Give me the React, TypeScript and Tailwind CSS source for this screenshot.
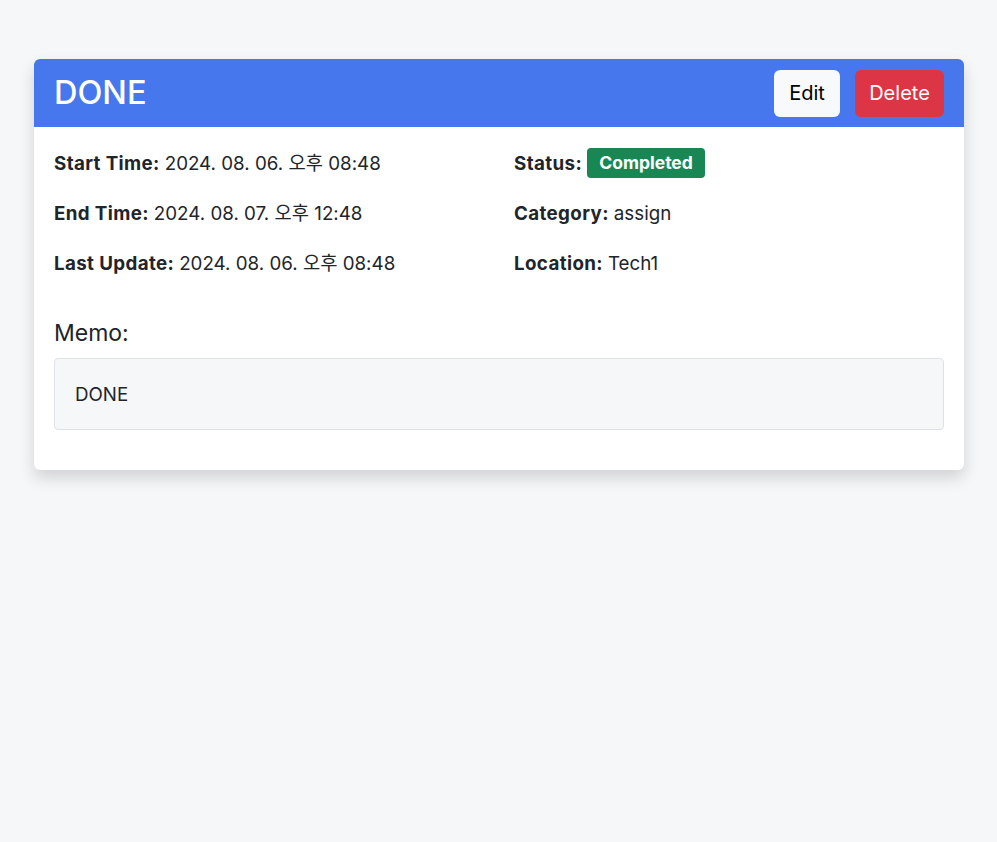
const rows = [
  { left: ["Start Time:", "2024. 08. 06. 오후 08:48"], right: "status" },
  { left: ["End Time:", "2024. 08. 07. 오후 12:48"], right: ["Category:", "assign"] },
  { left: ["Last Update:", "2024. 08. 06. 오후 08:48"], right: ["Location:", "Tech1"] },
];

function Field({ label, value }: { label: string; value: string }) {
  return (
    <p className="flex h-[30px] items-center pt-[2px]">
      <span className="font-bold tracking-[0.02em]">{label}</span>
      <span className="ml-[5px]">{value}</span>
    </p>
  );
}

export default function App() {
  return (
    <div
      className="min-h-screen bg-[#f6f7f9] pr-[33px] pl-[34px] pt-[59px] text-[#212529]"
      style={{ fontFamily: 'Inter, "Noto Sans CJK KR", sans-serif' }}
    >
      <div className="overflow-hidden rounded-[6px] bg-white shadow-[0_8px_16px_rgba(0,0,0,0.15)]">
        <div className="flex h-[68px] items-center justify-between bg-[#4677ec] px-5">
          <h2 className="text-[32.5px] font-medium leading-none text-white">DONE</h2>
          <div className="flex gap-[15px]">
            <button
              type="button"
              className="h-[47px] w-[66px] rounded-[6px] bg-[#f8f9fa] text-[20px] text-black"
            >
              Edit
            </button>
            <button
              type="button"
              className="h-[47px] w-[89px] rounded-[6px] bg-[#dc3545] text-[20px] text-white"
            >
              Delete
            </button>
          </div>
        </div>

        <div className="px-5 pt-[21px] pb-10 text-[18.75px]">
          <div className="grid grid-cols-2 gap-x-[30px] gap-y-5">
            {rows.map((row, i) => (
              <div key={i} className="contents">
                <Field label={row.left[0]} value={row.left[1]} />
                {row.right === "status" ? (
                  <p className="flex h-[30px] items-center">
                    <span className="pt-[2px] font-bold tracking-[0.02em]">Status:</span>
                    <span className="ml-[5px] flex h-[30px] w-[118px] items-center justify-center rounded-[4px] bg-[#198754] text-[17.5px] font-bold text-white">
                      Completed
                    </span>
                  </p>
                ) : (
                  <Field label={row.right[0]} value={row.right[1]} />
                )}
              </div>
            ))}
          </div>

          <h5 className="mt-[40px] text-[23px] leading-[30px]">Memo:</h5>
          <div className="mt-[10px] flex h-[72px] items-center rounded-[4px] border border-[#dee2e6] bg-[#f6f7f9] px-5 pt-[2px]">
            DONE
          </div>
        </div>
      </div>
    </div>
  );
}
